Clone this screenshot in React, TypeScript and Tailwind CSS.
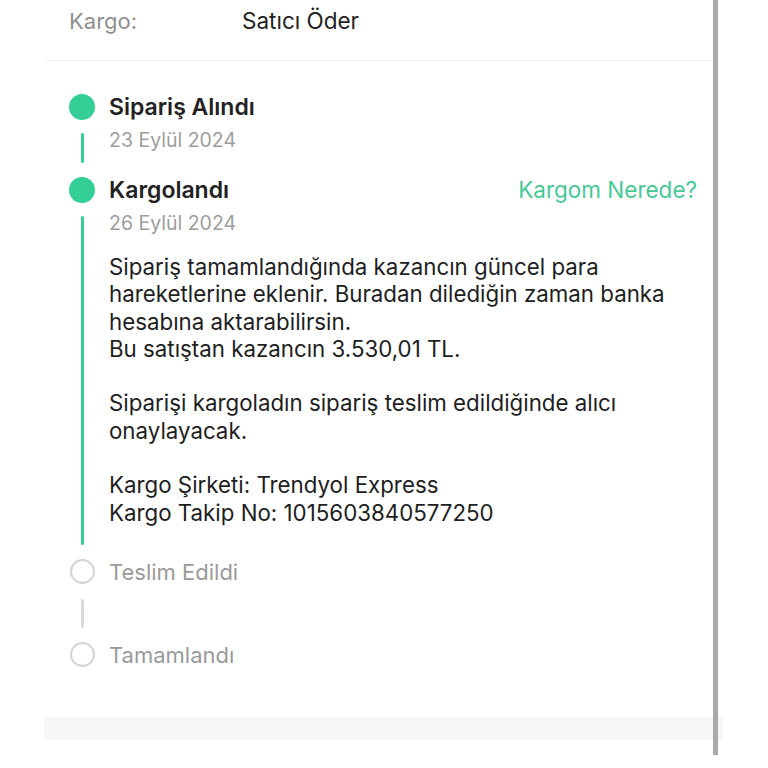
import React from 'react';

interface Step {
  title: string;
  date?: string;
  done: boolean;
  body?: string;
  lineH: number;
  action?: string;
}

const body = `Sipariş tamamlandığında kazancın güncel para
hareketlerine eklenir. Buradan dilediğin zaman banka
hesabına aktarabilirsin.
Bu satıştan kazancın 3.530,01 TL.

Siparişi kargoladın sipariş teslim edildiğinde alıcı
onaylayacak.

Kargo Şirketi: Trendyol Express
Kargo Takip No: 1015603840577250`;

const steps: Step[] = [
  { title: 'Sipariş Alındı', date: '23 Eylül 2024', done: true, lineH: 30 },
  {
    title: 'Kargolandı',
    date: '26 Eylül 2024',
    done: true,
    body,
    lineH: 329,
    action: 'Kargom Nerede?',
  },
  { title: 'Teslim Edildi', done: false, lineH: 29 },
  { title: 'Tamamlandı', done: false, lineH: 0 },
];

const App: React.FC = () => {
  return (
    <div
      className="relative w-[768px] h-[768px] bg-white overflow-hidden"
      style={{ fontFamily: 'Inter, "Noto Sans", sans-serif' }}
    >
      {/* header row */}
      <div className="flex items-center h-[42px] pl-[69px]">
        <span className="w-[173px] text-[22px] text-[#8f8f8f]">Kargo:</span>
        <span className="text-[22.5px] text-[#222]">Satıcı Öder</span>
      </div>

      <div className="ml-[45px] w-[668px] mt-[18px] border-t border-[#f1f1f1]" />

      {/* timeline */}
      <div className="pl-[69px] pr-[16px] pt-[33px] w-[713px]">
        {steps.map((s, i) => (
          <div key={i} className="flex">
            <div className="w-[26px] flex flex-col items-center shrink-0">
              {s.done ? (
                <div className="w-[26px] h-[26px] rounded-full bg-[#34cf96]" />
              ) : (
                <div className="w-[25px] h-[25px] rounded-full border-2 border-[#d4d4d4]" />
              )}
              {s.lineH > 0 && (
                <div
                  className={`w-[3px] rounded-full mb-[14px] ${s.done ? 'bg-[#34cf96] mt-[13px]' : 'bg-[#d9d9d9] mt-[15px]'}`}
                  style={{ height: s.lineH }}
                />
              )}
            </div>
            <div className="flex-1 pl-[14px]">
              <div className="flex items-center justify-between h-[26px]">
                <span
                  className={
                    s.done
                      ? 'text-[23px] font-semibold text-[#222]'
                      : 'text-[22px] text-[#9a9a9a]'
                  }
                >
                  {s.title}
                </span>
                {s.action && (
                  <span className="text-[22.5px] text-[#45c995]">{s.action}</span>
                )}
              </div>
              {s.date && (
                <div className="mt-[8px] leading-[24px] text-[19.5px] text-[#9d9d9d]">
                  {s.date}
                </div>
              )}
              {s.body && (
                <div className="mt-[18px] whitespace-pre-line text-[22.3px] leading-[27.3px] text-[#1e1e1e]">
                  {s.body}
                </div>
              )}
            </div>
          </div>
        ))}
      </div>

      <div className="absolute left-[44px] top-[717px] w-[679px] h-[23px] bg-[#f6f6f6]" />
      <div className="absolute left-[713px] top-0 w-[5px] h-[755px] bg-[#a9a9a9]" />
    </div>
  );
};

export default App;
